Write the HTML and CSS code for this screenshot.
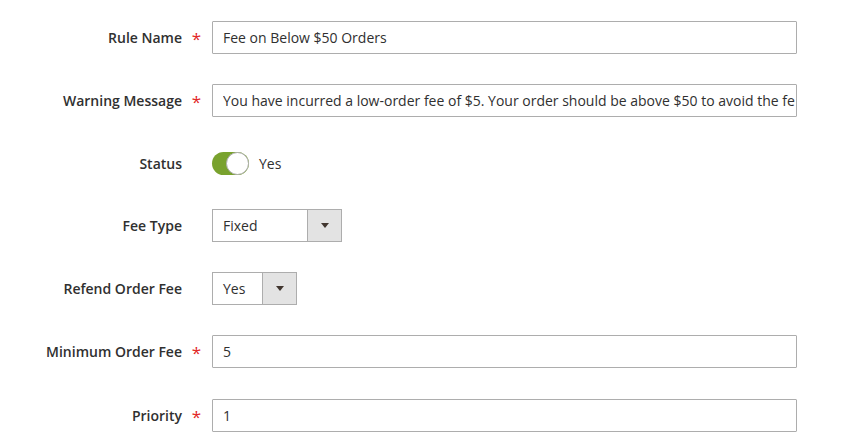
FILE: index.html
```html
<!DOCTYPE html>
<html>
<head>
<meta charset="utf-8">
<link rel="stylesheet" href="styles.css">
</head>
<body>
<form class="form">
  <div class="row">
    <label class="label required">Rule Name</label>
    <div class="control"><input class="input" type="text" value="Fee on Below $50 Orders"></div>
  </div>
  <div class="row">
    <label class="label required">Warning Message</label>
    <div class="control"><input class="input" type="text" value="You have incurred a low-order fee of $5. Your order should be above $50 to avoid the fee."></div>
  </div>
  <div class="row row-short">
    <label class="label">Status</label>
    <div class="control toggle-wrap">
      <span class="toggle"><span class="knob"></span></span>
      <span class="toggle-text">Yes</span>
    </div>
  </div>
  <div class="row">
    <label class="label">Fee Type</label>
    <div class="control">
      <div class="select select-wide"><span class="select-value">Fixed</span><span class="select-btn"><span class="arrow"></span></span></div>
    </div>
  </div>
  <div class="row">
    <label class="label">Refend Order Fee</label>
    <div class="control">
      <div class="select select-narrow"><span class="select-value">Yes</span><span class="select-btn"><span class="arrow"></span></span></div>
    </div>
  </div>
  <div class="row">
    <label class="label required">Minimum Order Fee</label>
    <div class="control"><input class="input" type="text" value="5"></div>
  </div>
  <div class="row row-last">
    <label class="label required">Priority</label>
    <div class="control"><input class="input" type="text" value="1"></div>
  </div>
</form>
</body>
</html>
```
FILE: styles.css
```css
* { box-sizing: border-box; }
html, body { margin: 0; padding: 0; background: #fff; }
body {
  font-family: "Open Sans", "Liberation Sans", sans-serif;
  font-size: 14px;
  color: #303030;
  width: 866px;
  height: 445px;
  overflow: hidden;
}
.form {
  display: flex;
  flex-direction: column;
  gap: 30px;
  padding-top: 21px;
}
.row {
  display: flex;
  align-items: center;
  height: 33px;
}
.row-short { height: 32px; }
.row-last { margin-top: 1px; }
.label {
  position: relative;
  width: 212px;
  flex: none;
  text-align: right;
  padding-right: 30px;
  font-weight: 600;
  color: #303030;
  line-height: 33px;
}
.label.required::after {
  content: "*";
  position: absolute;
  right: 11px;
  top: 1px;
  color: #e22626;
  font-size: 17px;
  font-weight: 400;
}
.control {
  width: 585px;
  flex: none;
}
.input {
  display: block;
  width: 585px;
  height: 33px;
  border: 1px solid #adadad;
  border-radius: 1px;
  padding: 0 1px 0 10px;
  font-family: "Open Sans", "Liberation Sans", sans-serif;
  font-size: 14px;
  color: #303030;
  background: #fff;
  outline: none;
}
.toggle-wrap {
  display: flex;
  align-items: center;
  gap: 10px;
}
.toggle {
  position: relative;
  display: block;
  width: 37px;
  height: 23px;
  border-radius: 12px;
  background: #79a22e;
}
.knob {
  position: absolute;
  right: 0;
  top: 0;
  width: 23px;
  height: 23px;
  border-radius: 50%;
  background: #fff;
  border: 1px solid #adadad;
}
.toggle-text {
  color: #303030;
}
.select {
  display: flex;
  height: 33px;
  border: 1px solid #adadad;
  background: #fff;
}
.select-wide { width: 130px; }
.select-narrow { width: 85px; }
.select-value {
  flex: 1;
  padding-left: 10px;
  line-height: 31px;
}
.select-btn {
  width: 34px;
  flex: none;
  border-left: 1px solid #adadad;
  background: #e3e3e3;
  display: flex;
  align-items: center;
  justify-content: center;
}
.arrow {
  width: 0;
  height: 0;
  border-left: 4px solid transparent;
  border-right: 4px solid transparent;
  border-top: 5px solid #41362f;
}
```
